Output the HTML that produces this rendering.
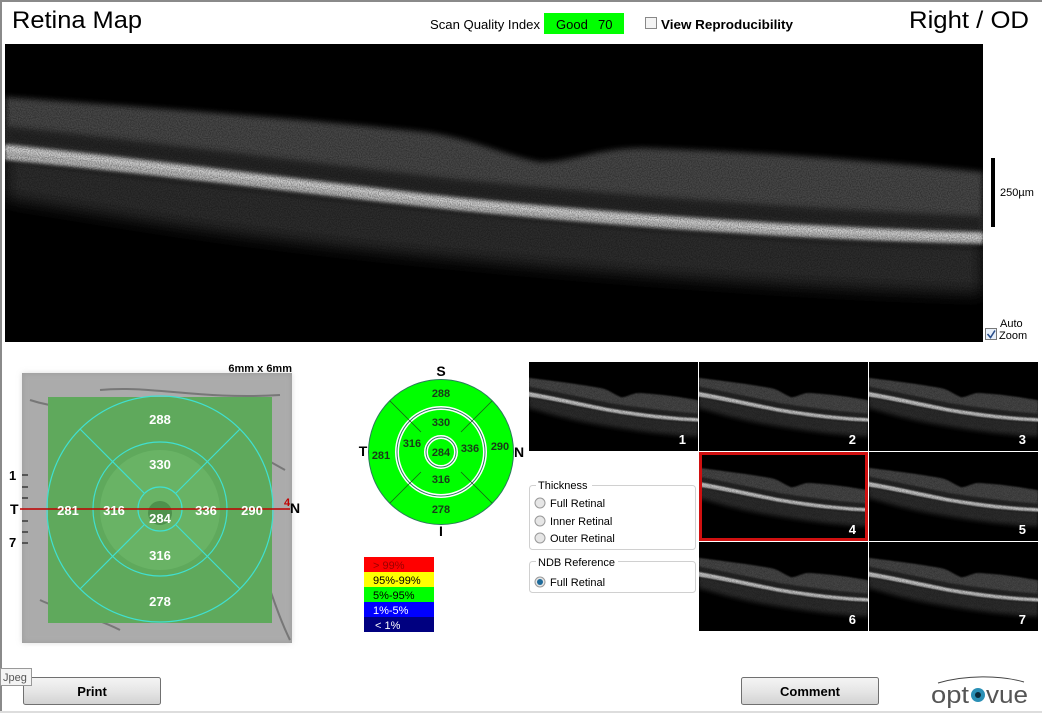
<!DOCTYPE html>
<html><head><meta charset="utf-8"><style>
html,body{margin:0;padding:0;background:#fff;}
svg{display:block;font-family:"Liberation Sans",sans-serif;}
</style></head><body>
<svg width="1042" height="713" viewBox="0 0 1042 713" xmlns="http://www.w3.org/2000/svg">
<defs>
  <filter id="bl" filterUnits="userSpaceOnUse" x="-50" y="-50" width="1100" height="400"><feGaussianBlur stdDeviation="8"/></filter>
  <filter id="bl2" filterUnits="userSpaceOnUse" x="-50" y="-50" width="1100" height="400"><feGaussianBlur stdDeviation="3"/></filter>
  <filter id="bl4" filterUnits="userSpaceOnUse" x="-50" y="-50" width="1100" height="400"><feGaussianBlur stdDeviation="1.5"/></filter>
  <filter id="bl3"><feGaussianBlur stdDeviation="3"/></filter>
  <filter id="noise" x="0" y="0" width="100%" height="100%">
    <feTurbulence type="fractalNoise" baseFrequency="0.9" numOctaves="1" seed="3"/>
    <feColorMatrix type="matrix" values="0 0 0 0 0  0 0 0 0 0  0 0 0 0 0  0 0 0 1.6 -0.5"/>
  </filter>
  <symbol id="oct" viewBox="0 0 978 298" preserveAspectRatio="none">
    <rect width="978" height="298" fill="#000"/>
    <path d="M0,108 C200,134 400,156 600,174 C800,190 900,194 978,196 L978,250 C800,245 600,230 400,210 C200,190 100,170 0,155 Z" fill="#2e2e2e" filter="url(#bl)"/>
    <path d="M0,53 C150,64 300,75 420,88 C470,95 500,112 535,118 C570,118 590,104 640,104 C760,108 880,118 978,128 L978,190 C800,184 600,172 400,150 C250,132 120,115 0,101 Z" fill="#4a4a4a" filter="url(#bl2)"/>
    <path d="M0,82 C150,98 300,118 450,135 C600,150 800,165 978,172 L978,188 C800,182 600,170 420,150 C260,130 120,112 0,100 Z" fill="#262626" filter="url(#bl2)"/>
    <path d="M0,100 C150,116 300,136 450,153 C620,170 800,183 978,188 L978,200 C800,196 620,183 450,166 C300,150 150,130 0,116 Z" fill="#bdbdbd" filter="url(#bl4)"/>
    <path d="M0,105 C150,121 300,141 450,158 C620,175 800,188 978,193" fill="none" stroke="#e8e8e8" stroke-width="2.5" filter="url(#bl4)"/>
    <rect width="978" height="298" filter="url(#noise)" opacity="0.5"/>
  </symbol>
</defs>

<rect x="0" y="0" width="1042" height="2" fill="#8a8a8a"/>
<rect x="0" y="0" width="2" height="713" fill="#8a8a8a"/>

<text x="12" y="28" font-size="24" fill="#000" textLength="130" lengthAdjust="spacingAndGlyphs">Retina Map</text>
<text x="909" y="28" font-size="24" fill="#000" textLength="120" lengthAdjust="spacingAndGlyphs">Right / OD</text>
<text x="430" y="29" font-size="13" fill="#000" textLength="110" lengthAdjust="spacingAndGlyphs">Scan Quality Index</text>
<rect x="544" y="13" width="80" height="21" fill="#00ff00"/>
<text x="556" y="29" font-size="13" fill="#000">Good</text>
<text x="598" y="29" font-size="13" fill="#000">70</text>
<rect x="645.5" y="17.5" width="11" height="11" fill="#f4f4f4" stroke="#888"/>
<text x="661" y="29" font-size="13" font-weight="bold" fill="#000" textLength="132" lengthAdjust="spacingAndGlyphs">View Reproducibility</text>

<svg x="5" y="44" width="978" height="298" viewBox="0 0 978 298" preserveAspectRatio="none"><use href="#oct" width="978" height="298"/></svg>

<rect x="991" y="158" width="4" height="69" fill="#000"/>
<text x="1000" y="196" font-size="11" fill="#000">250µm</text>
<rect x="985.5" y="328.5" width="11" height="11" fill="#e8f0fa" stroke="#777"/>
<path d="M987.5,334 L990.5,337.5 L995,330.5" stroke="#2a4e8a" stroke-width="1.6" fill="none"/>
<text x="1000" y="327" font-size="11" fill="#000">Auto</text>
<text x="999" y="339" font-size="11" fill="#000">Zoom</text>

<text x="292" y="372" font-size="11" font-weight="bold" fill="#000" text-anchor="end">6mm x 6mm</text>
<rect x="22" y="373" width="270" height="270" fill="#9a9a9a"/>
<rect x="22" y="373" width="270" height="270" fill="#bdbdbd" opacity="0.5" filter="url(#bl3)"/>
<path d="M100,390 C150,385 200,400 280,395 M30,400 C60,410 80,405 110,420 M200,430 C230,440 250,450 285,470 M260,560 C270,590 280,620 290,640 M40,600 C60,610 90,615 120,630" stroke="#555" stroke-width="2" fill="none" opacity="0.6"/>
<rect x="48" y="397" width="224" height="226" fill="#4f9a4f"/>
<rect x="48" y="397" width="224" height="226" fill="#6fb86a" opacity="0.5"/>
<circle cx="160" cy="510" r="60" fill="#79c274" opacity="0.4"/>
<circle cx="160" cy="513" r="12" fill="#3c7a3c" opacity="0.6"/>
<g stroke="#40e0d0" stroke-width="1.2" fill="none">
  <circle cx="160" cy="509" r="113"/>
  <circle cx="160" cy="509" r="67"/>
  <circle cx="160" cy="509" r="22"/>
  <path d="M80,429 L144,493 M240,429 L176,493 M80,589 L144,525 M240,589 L176,525"/>
</g>
<line x1="20" y1="509" x2="290" y2="509" stroke="#c00000" stroke-width="1.5"/>
<g fill="#fff" font-size="13" font-weight="bold" text-anchor="middle">
  <text x="160" y="424">288</text><text x="160" y="469">330</text>
  <text x="160" y="523">284</text><text x="160" y="560">316</text>
  <text x="160" y="606">278</text><text x="68" y="515">281</text>
  <text x="114" y="515">316</text><text x="206" y="515">336</text>
  <text x="252" y="515">290</text>
</g>
<g font-size="14" font-weight="bold" fill="#000">
  <text x="10" y="514">T</text><text x="290" y="513">N</text>
  <text x="9" y="480" font-size="13">1</text><text x="9" y="547" font-size="13">7</text>
</g>
<text x="284" y="506" font-size="11" font-weight="bold" fill="#c00000">4</text>
<g stroke="#000" stroke-width="1"><path d="M22,475h6M22,487h6M22,498h6M22,521h6M22,532h6M22,543h6"/></g>

<g stroke="#1a6a1a" stroke-width="1">
<circle cx="441" cy="452" r="72.5" fill="#00ff00" stroke="#2a7a5a"/>
<circle cx="441" cy="452" r="44" fill="none" stroke="#fff" stroke-width="4"/>
<circle cx="441" cy="452" r="44" fill="none" stroke="#2a7a5a"/>
<circle cx="441" cy="452" r="15" fill="none" stroke="#fff" stroke-width="4"/>
<circle cx="441" cy="452" r="15" fill="none" stroke="#2a7a5a"/>
<path d="M390,401 L421,432 M492,401 L461,432 M390,503 L421,472 M492,503 L461,472" stroke="#1a5a1a" stroke-width="0.8"/>
</g>
<g font-size="11" font-weight="bold" fill="#1a3a1a" text-anchor="middle">
  <text x="441" y="397">288</text><text x="441" y="426">330</text>
  <text x="441" y="456">284</text><text x="441" y="483">316</text>
  <text x="441" y="513">278</text><text x="381" y="459">281</text>
  <text x="412" y="447">316</text><text x="470" y="452">336</text>
  <text x="500" y="450">290</text>
</g>
<g font-size="14" font-weight="bold" fill="#000" text-anchor="middle">
  <text x="441" y="376">S</text><text x="441" y="536">I</text>
  <text x="363" y="456">T</text><text x="519" y="457">N</text>
</g>

<rect x="364" y="557" width="70" height="15" fill="#ff0000"/>
<rect x="364" y="572" width="70" height="15" fill="#ffff00"/>
<rect x="364" y="587" width="70" height="15" fill="#00ff00"/>
<rect x="364" y="602" width="70" height="15" fill="#0000ff"/>
<rect x="364" y="617" width="70" height="15" fill="#000080"/>
<g font-size="11">
  <text x="373" y="569" fill="#900">&gt; 99%</text>
  <text x="373" y="584" fill="#000">95%-99%</text>
  <text x="373" y="599" fill="#000">5%-95%</text>
  <text x="373" y="614" fill="#fff">1%-5%</text>
  <text x="375" y="629" fill="#fff">&lt; 1%</text>
</g>

<rect x="529.5" y="485.5" width="166" height="64" rx="3" fill="#fff" stroke="#d0d0d0"/>
<rect x="536" y="478" width="56" height="12" fill="#fff"/>
<text x="538" y="489" font-size="11" fill="#000">Thickness</text>
<g fill="#e6e6e6" stroke="#999"><circle cx="540" cy="503" r="5"/><circle cx="540" cy="521" r="5"/><circle cx="540" cy="538" r="5"/></g>
<g font-size="11" fill="#000"><text x="550" y="507">Full Retinal</text><text x="550" y="525">Inner Retinal</text><text x="550" y="542">Outer Retinal</text></g>
<rect x="529.5" y="561.5" width="166" height="31" rx="3" fill="#fff" stroke="#d0d0d0"/>
<rect x="536" y="555" width="82" height="12" fill="#fff"/>
<text x="538" y="566" font-size="11" fill="#000">NDB Reference</text>
<circle cx="540" cy="582" r="5" fill="#e6e6e6" stroke="#999"/>
<circle cx="540" cy="582" r="3" fill="#1e6a9a"/>
<text x="550" y="586" font-size="11" fill="#000">Full Retinal</text>

<g>
<svg x="529" y="362" width="169" height="89" viewBox="0 0 978 298" preserveAspectRatio="none"><use href="#oct"/></svg>
<svg x="699" y="362" width="169" height="89" viewBox="0 0 978 298" preserveAspectRatio="none"><use href="#oct"/></svg>
<svg x="869" y="362" width="169" height="89" viewBox="0 0 978 298" preserveAspectRatio="none"><use href="#oct"/></svg>
<svg x="699" y="452" width="169" height="89" viewBox="0 0 978 298" preserveAspectRatio="none"><use href="#oct"/></svg>
<svg x="869" y="452" width="169" height="89" viewBox="0 0 978 298" preserveAspectRatio="none"><use href="#oct"/></svg>
<svg x="699" y="542" width="169" height="89" viewBox="0 0 978 298" preserveAspectRatio="none"><use href="#oct"/></svg>
<svg x="869" y="542" width="169" height="89" viewBox="0 0 978 298" preserveAspectRatio="none"><use href="#oct"/></svg>
</g>
<rect x="700.5" y="453.5" width="166" height="86" fill="none" stroke="#d01010" stroke-width="3"/>
<g font-size="13" font-weight="bold" fill="#fff" text-anchor="end">
  <text x="686" y="444">1</text><text x="856" y="444">2</text><text x="1026" y="444">3</text>
  <text x="856" y="534">4</text><text x="1026" y="534">5</text>
  <text x="856" y="624">6</text><text x="1026" y="624">7</text>
</g>

<defs><linearGradient id="bg" x1="0" y1="0" x2="0" y2="1"><stop offset="0" stop-color="#f4f4f4"/><stop offset="0.5" stop-color="#e6e6e6"/><stop offset="1" stop-color="#d2d2d2"/></linearGradient></defs>
<rect x="23.5" y="677.5" width="137" height="27" rx="2" fill="url(#bg)" stroke="#707070"/>
<text x="92" y="696" font-size="13" font-weight="bold" text-anchor="middle">Print</text>
<rect x="0.5" y="668.5" width="31" height="17" fill="#f4f4f4" stroke="#999"/>
<text x="3" y="681" font-size="11" fill="#555">Jpeg</text>
<rect x="741.5" y="677.5" width="137" height="27" rx="2" fill="url(#bg)" stroke="#707070"/>
<text x="810" y="696" font-size="13" font-weight="bold" text-anchor="middle">Comment</text>

<path d="M938,683 C965,675 1000,675 1024,682" stroke="#444" stroke-width="1" fill="none"/>
<text x="931" y="703" font-size="24" fill="#555" textLength="38" lengthAdjust="spacingAndGlyphs">opt</text>
<circle cx="978" cy="695" r="7" fill="#2a8fb5"/>
<circle cx="978" cy="695" r="3" fill="#0a2a3a"/>
<text x="986" y="703" font-size="24" fill="#555" textLength="42" lengthAdjust="spacingAndGlyphs">vue</text>
<rect x="0" y="711" width="1042" height="2" fill="#ddd"/>
</svg>
</body></html>
